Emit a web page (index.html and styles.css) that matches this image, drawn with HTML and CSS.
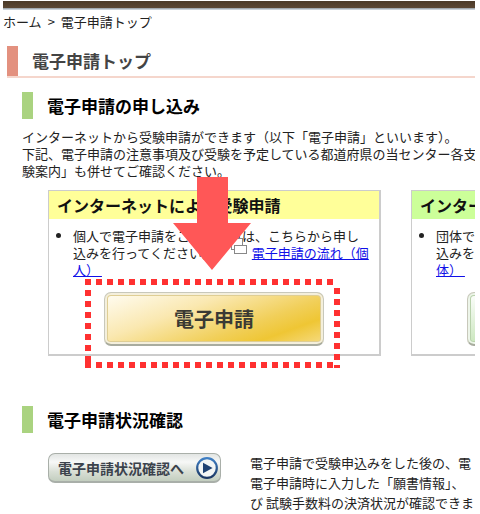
FILE: index.html
```html
<!DOCTYPE html>
<html lang="ja">
<head>
    <meta charset="UTF-8">
    <meta name="viewport" content="width=device-width, initial-scale=1.0">
    <title>電子申請トップ</title>
    <link rel="stylesheet" href="styles.css">
</head>
<body>

<div class="page">
    <header class="topbar"></header>
    <nav class="breadcrumb"><span>ホーム</span><span>&gt;</span><span>電子申請トップ</span></nav>
    <h1 class="page-title">電子申請トップ</h1>

    <main class="content">
        <section>
            <h2 class="section-title">電子申請の申し込み</h2>
            <p class="intro">インターネットから受験申請ができます（以下「電子申請」といいます）。<br>下記、電子申請の注意事項及び受験を予定している都道府県の当センター各支<br>験案内」も併せてご確認ください。</p>

            <div class="panels">
                <div class="panel">
                    <h3 class="panel-title yellow">インターネットによる受験申請</h3>
                    <ul class="panel-list">
                        <li>個人で電子申請をご希望の方は、こちらから申し<br>込みを行ってください。
                            <svg class="window-icon" viewBox="0 0 18 18" aria-hidden="true">
                                <rect x="1.5" y="1.5" width="11" height="11" fill="#fff" stroke="#888"/>
                                <rect x="4.5" y="8.5" width="12" height="8" fill="#fff" stroke="#888"/>
                            </svg>
                            <a href="#">電子申請の流れ（個人）&nbsp;</a></li>
                    </ul>
                    <button class="apply-button gold" type="button">電子申請</button>

                    <!-- 申請ボタンの位置を示す矢印と枠 -->
                    <svg class="guide" viewBox="0 0 256 192" aria-hidden="true">
                        <path d="M112 0h31v46h23l-39 47-39-47h24z" fill="#ff5757"/>
                        <path d="M0 105h253M0 188h253" stroke="#ff3131" stroke-width="6" stroke-dasharray="6 5" fill="none"/>
                        <path d="M3 113v78M252 111v80" stroke="#ff3131" stroke-width="6" stroke-dasharray="6 5" fill="none"/>
                    </svg>
                </div>

                <div class="panel">
                    <h3 class="panel-title green">インターネットによる団体申請</h3>
                    <ul class="panel-list">
                        <li>団体で電子申請をご希望の方は、こちらから申し<br>込みを行ってください。
                            <svg class="window-icon" viewBox="0 0 18 18" aria-hidden="true">
                                <rect x="1.5" y="1.5" width="11" height="11" fill="#fff" stroke="#888"/>
                                <rect x="4.5" y="8.5" width="12" height="8" fill="#fff" stroke="#888"/>
                            </svg>
                            <a href="#">電子申請の流れ（団体）&nbsp;</a></li>
                    </ul>
                    <button class="apply-button leaf" type="button">団体申請</button>
                </div>
            </div>
        </section>

        <section class="status">
            <h2 class="section-title">電子申請状況確認</h2>
            <div class="status-row">
                <button class="status-button" type="button">
                    電子申請状況確認へ
                    <svg class="play-icon" viewBox="0 0 22 22" aria-hidden="true">
                        <defs>
                            <linearGradient id="ring" x1="0" y1="0" x2="0" y2="1">
                                <stop offset="0" stop-color="#3f7fc4"/>
                                <stop offset="1" stop-color="#1b3763"/>
                            </linearGradient>
                        </defs>
                        <circle cx="11" cy="11" r="9.8" fill="#f3f6f5" stroke="url(#ring)" stroke-width="2.2"/>
                        <path d="M7 5.8l9.6 5.2L7 16.2z" fill="#1f4272"/>
                    </svg>
                </button>
                <p class="status-text">電子申請で受験申込みをした後の、電<br>電子申請時に入力した「願書情報」、<br>び 試験手数料の決済状況が確認できま</p>
            </div>
        </section>
    </main>
</div>

</body>
</html>
```
FILE: styles.css
```css
* {
    box-sizing: border-box;
}

body {
    margin: 0;
    background: #fff;
    color: #222;
    font-family: "Noto Sans CJK JP", sans-serif;
    font-size: 13px;
    line-height: 17px;
}

h1, h2, h3, p, ul {
    margin: 0;
    padding: 0;
}

a {
    color: #1010e8;
}

button {
    font-family: inherit;
    cursor: pointer;
}

.page {
    margin: 0 5px 0 3px;
    overflow: hidden;
}

.topbar {
    height: 10px;
    margin-bottom: 3px;
    background: linear-gradient(#fff 1px, #4b3a28 1px, #5b4734 8px, #8e969b 8px, #dde5ec 10px);
}

.breadcrumb {
    display: flex;
    gap: 6px;
}

.page-title {
    margin: 16px 0 0 4px;
    padding-left: 14px;
    border-left: 11px solid #e3917f;
    box-shadow: 0 2px #f5d6cc;
    color: #444;
    font-size: 17px;
    font-weight: bold;
    line-height: 30px;
}

.content {
    padding: 16px 0 0 19px;
}

.section-title {
    padding-left: 14px;
    border-left: 11px solid #aad380;
    color: #000;
    font-size: 17px;
    line-height: 27px;
}

.intro {
    margin-top: 9px;
    white-space: nowrap;
}

.panels {
    display: flex;
    gap: 30px;
    margin: 11px 0 0 26px;
}

.panel {
    position: relative;
    flex: 0 0 333px;
    padding-bottom: 8px;
    border: 2px solid #ccc;
    border-top-width: 1px;
    border-left-width: 1px;
}

.panel-title {
    padding-left: 8px;
    color: #111;
    font-size: 16px;
    line-height: 28px;
}

.yellow {
    background: #ffff99;
}

.green {
    background: #ccff99;
}

.panel-list {
    padding: 8px 6px 0 24px;
}

.window-icon {
    width: 18px;
    height: 18px;
    margin: -12px 1px 4px 12px;
    vertical-align: middle;
}

.apply-button {
    display: block;
    width: 220px;
    height: 54px;
    margin: 14px auto 0;
    padding: 0;
    border: 1px solid #c8c8bb;
    border-bottom: 2px solid #a9ac9f;
    border-radius: 7px;
    color: #3a3a34;
    font-size: 20px;
    font-weight: bold;
}

.gold {
    background: linear-gradient(160deg, #fffdf5 0%, #fae8b0 35%, #f1cf59 65%, #efc634 80%, #f6dc85 100%);
    box-shadow: inset 0 0 0 2px #f4efdc, inset 0 0 0 3px #dfce94;
}

.leaf {
    background: linear-gradient(160deg, #fff 0%, #c4e3b5 45%, #8fc873 100%);
    box-shadow: inset 0 0 0 2px #edf5e9, inset 0 0 0 3px #b9d2ac;
}

.guide {
    position: absolute;
    left: 36px;
    top: -14px;
    width: 256px;
    height: 192px;
    pointer-events: none;
}

.status {
    margin-top: 50px;
}

.status-row {
    display: flex;
    align-items: flex-start;
    gap: 29px;
    margin: 20px 0 0 26px;
}

.status-button {
    display: flex;
    flex: 0 0 173px;
    align-items: center;
    justify-content: space-between;
    height: 30px;
    padding: 0 2px 0 9px;
    border: 1px solid #a9afa9;
    border-bottom-width: 2px;
    border-radius: 7px;
    background: linear-gradient(#e2e5e3, #f7f8f7 30%, #d9dfd6 65%, #c3cebf);
    color: #3b424c;
    font-size: 14px;
    font-weight: bold;
    white-space: nowrap;
}

.play-icon {
    width: 22px;
    height: 22px;
}

.status-text {
    line-height: 20px;
    white-space: nowrap;
}
```
